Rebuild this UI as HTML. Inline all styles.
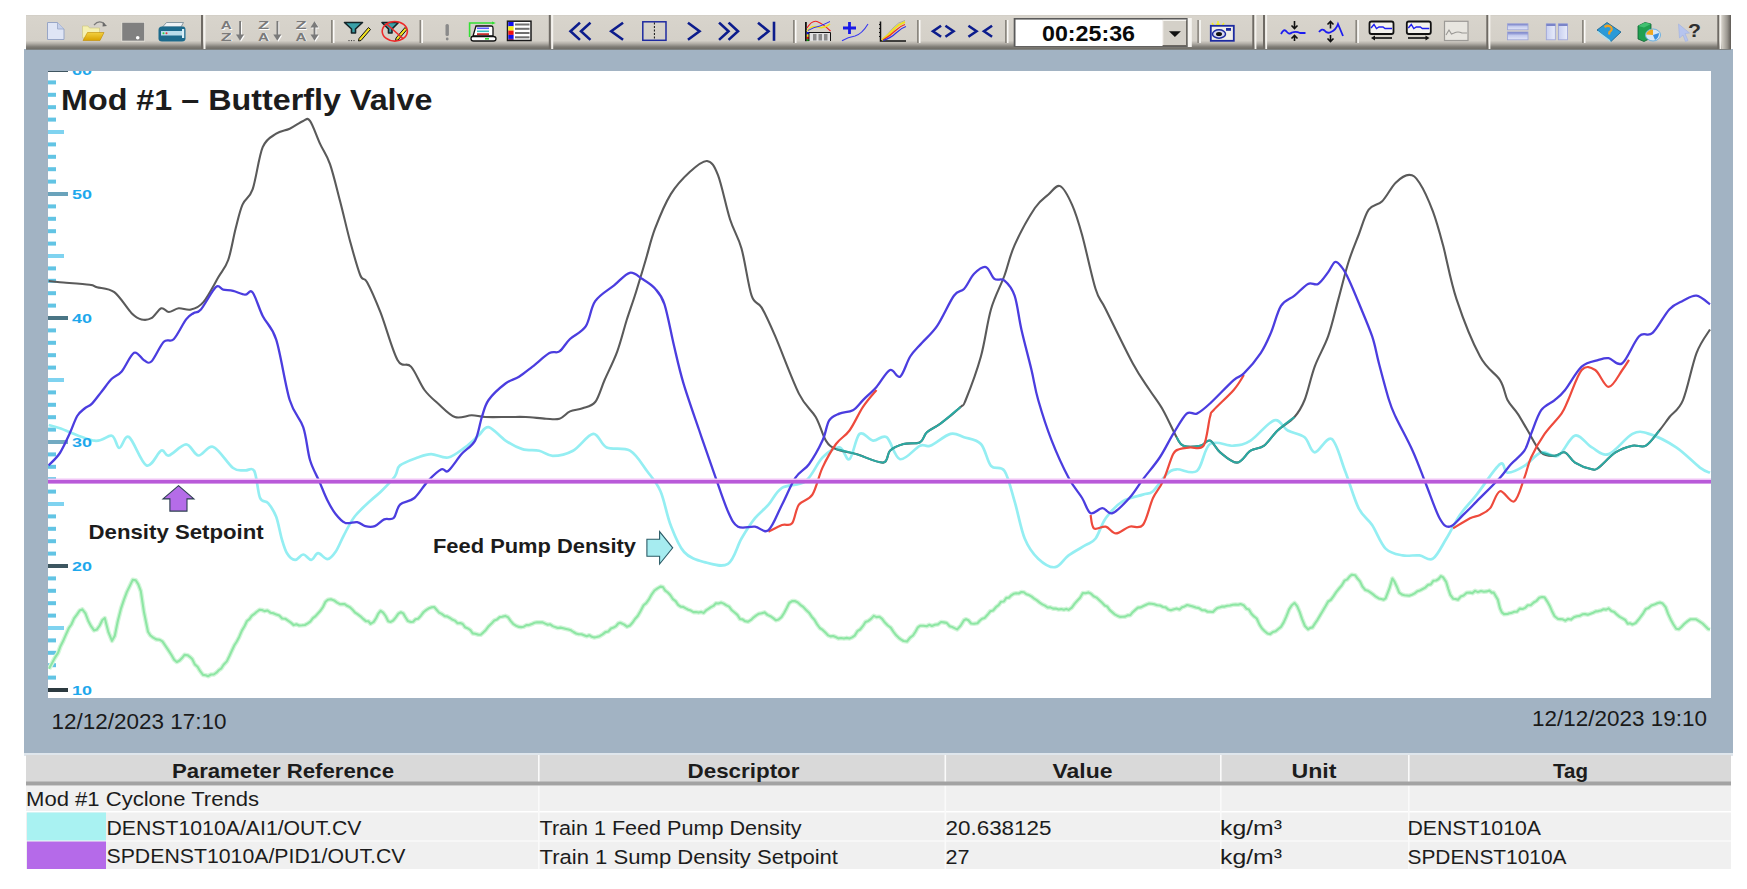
<!DOCTYPE html>
<html><head><meta charset="utf-8">
<style>
html,body{margin:0;padding:0;background:#fff;}
body{width:1747px;height:889px;position:relative;overflow:hidden;font-family:"Liberation Sans",sans-serif;}
svg text{font-family:"Liberation Sans",sans-serif;}
.yl{font-weight:bold;font-size:12px;fill:#1ea8ec;}
</style></head><body>
<svg style="position:absolute;left:0;top:0" width="1747" height="889" viewBox="0 0 1747 889">
<defs>
<clipPath id="pc"><rect x="48" y="71" width="1663" height="627"/></clipPath>
<linearGradient id="tbg" x1="0" y1="0" x2="0" y2="1">
<stop offset="0" stop-color="#cfcbc3"/><stop offset="0.03" stop-color="#d8d4cc"/><stop offset="0.74" stop-color="#d4d0c8"/><stop offset="0.82" stop-color="#b4b0a9"/><stop offset="0.92" stop-color="#7e7b75"/><stop offset="1" stop-color="#6c6a64"/>
</linearGradient>
</defs>
<rect x="24" y="49" width="1709" height="704" fill="#a2b3c3"/>
<rect x="26" y="15" width="1705" height="34.7" fill="url(#tbg)"/>
<rect x="48" y="71" width="1663" height="627" fill="#fff"/>
<g clip-path="url(#pc)">
<rect x="48" y="688.0" width="20" height="4" fill="#2c3a40"/>
<rect x="48" y="675.6" width="8" height="4" fill="#62c4e4"/>
<rect x="48" y="663.2" width="8" height="4" fill="#62c4e4"/>
<rect x="48" y="650.8" width="8" height="4" fill="#62c4e4"/>
<rect x="48" y="638.4" width="8" height="4" fill="#62c4e4"/>
<rect x="48" y="626.0" width="16" height="4" fill="#7fd3f0"/>
<rect x="48" y="613.6" width="8" height="4" fill="#62c4e4"/>
<rect x="48" y="601.2" width="8" height="4" fill="#62c4e4"/>
<rect x="48" y="588.8" width="8" height="4" fill="#62c4e4"/>
<rect x="48" y="576.4" width="8" height="4" fill="#62c4e4"/>
<rect x="48" y="564.0" width="20" height="4" fill="#3d5660"/>
<rect x="48" y="551.6" width="8" height="4" fill="#62c4e4"/>
<rect x="48" y="539.2" width="8" height="4" fill="#62c4e4"/>
<rect x="48" y="526.8" width="8" height="4" fill="#62c4e4"/>
<rect x="48" y="514.4" width="8" height="4" fill="#62c4e4"/>
<rect x="48" y="502.0" width="16" height="4" fill="#7fd3f0"/>
<rect x="48" y="489.6" width="8" height="4" fill="#62c4e4"/>
<rect x="48" y="477.2" width="8" height="4" fill="#62c4e4"/>
<rect x="48" y="464.8" width="8" height="4" fill="#62c4e4"/>
<rect x="48" y="452.4" width="8" height="4" fill="#62c4e4"/>
<rect x="48" y="440.0" width="20" height="4" fill="#72aac2"/>
<rect x="48" y="427.6" width="8" height="4" fill="#62c4e4"/>
<rect x="48" y="415.2" width="8" height="4" fill="#62c4e4"/>
<rect x="48" y="402.8" width="8" height="4" fill="#62c4e4"/>
<rect x="48" y="390.4" width="8" height="4" fill="#62c4e4"/>
<rect x="48" y="378.0" width="16" height="4" fill="#7fd3f0"/>
<rect x="48" y="365.6" width="8" height="4" fill="#62c4e4"/>
<rect x="48" y="353.2" width="8" height="4" fill="#62c4e4"/>
<rect x="48" y="340.8" width="8" height="4" fill="#62c4e4"/>
<rect x="48" y="328.4" width="8" height="4" fill="#62c4e4"/>
<rect x="48" y="316.0" width="20" height="4" fill="#4a7585"/>
<rect x="48" y="303.6" width="8" height="4" fill="#62c4e4"/>
<rect x="48" y="291.2" width="8" height="4" fill="#62c4e4"/>
<rect x="48" y="278.8" width="8" height="4" fill="#62c4e4"/>
<rect x="48" y="266.4" width="8" height="4" fill="#62c4e4"/>
<rect x="48" y="254.0" width="16" height="4" fill="#7fd3f0"/>
<rect x="48" y="241.6" width="8" height="4" fill="#62c4e4"/>
<rect x="48" y="229.2" width="8" height="4" fill="#62c4e4"/>
<rect x="48" y="216.8" width="8" height="4" fill="#62c4e4"/>
<rect x="48" y="204.4" width="8" height="4" fill="#62c4e4"/>
<rect x="48" y="192.0" width="20" height="4" fill="#6aa3bb"/>
<rect x="48" y="179.6" width="8" height="4" fill="#62c4e4"/>
<rect x="48" y="167.2" width="8" height="4" fill="#62c4e4"/>
<rect x="48" y="154.8" width="8" height="4" fill="#62c4e4"/>
<rect x="48" y="142.4" width="8" height="4" fill="#62c4e4"/>
<rect x="48" y="130.0" width="16" height="4" fill="#7fd3f0"/>
<rect x="48" y="117.6" width="8" height="4" fill="#62c4e4"/>
<rect x="48" y="105.2" width="8" height="4" fill="#62c4e4"/>
<rect x="48" y="92.8" width="8" height="4" fill="#62c4e4"/>
<rect x="48" y="80.4" width="8" height="4" fill="#62c4e4"/>
<rect x="48" y="68.0" width="20" height="4" fill="#3f5560"/>

<path d="M49.0,668.8 L51.3,664.5 L54.5,658.4 L58.0,652.9 L60.5,646.2 L63.1,641.1 L65.9,634.6 L68.8,628.2 L71.4,624.5 L74.1,618.4 L76.9,614.6 L79.7,610.5 L82.3,609.4 L85.4,613.3 L88.3,621.0 L91.2,626.4 L94.0,630.4 L96.8,629.6 L99.7,625.5 L102.4,620.0 L104.8,618.2 L108.5,632.4 L112.0,640.8 L114.8,635.8 L117.7,621.5 L121.0,608.6 L123.8,600.2 L126.9,591.9 L130.0,585.6 L132.7,579.9 L135.7,580.3 L138.3,584.4 L140.8,591.1 L144.0,612.3 L148.0,631.8 L150.4,635.5 L153.2,637.6 L156.3,639.4 L159.4,639.7 L162.4,641.4 L165.3,645.7 L168.3,650.1 L171.3,654.7 L174.2,659.8 L176.8,662.0 L179.6,660.5 L182.0,658.1 L184.5,654.9 L187.6,655.2 L189.8,656.8 L192.2,659.0 L194.8,664.4 L197.5,666.7 L200.2,671.2 L203.0,674.9 L205.6,675.2 L208.2,676.2 L211.0,674.5 L213.7,674.5 L216.4,672.7 L219.0,670.0 L221.4,668.3 L223.6,664.8 L226.8,661.4 L229.3,656.3 L231.7,651.0 L234.4,645.3 L236.8,641.5 L239.3,636.7 L241.9,630.6 L244.5,626.3 L247.0,621.0 L249.4,619.1 L251.7,615.9 L254.0,614.2 L256.5,612.0 L259.5,609.8 L261.9,610.0 L264.6,611.1 L267.5,610.5 L270.4,612.7 L273.4,613.3 L276.4,614.6 L279.3,615.6 L282.2,618.5 L285.1,618.7 L288.0,620.7 L290.9,622.6 L293.7,625.1 L296.5,624.3 L299.1,625.5 L302.1,625.3 L304.9,625.0 L307.7,623.4 L310.3,621.6 L312.9,618.2 L315.3,616.4 L318.1,613.2 L320.6,610.5 L323.1,606.8 L325.5,601.7 L327.9,599.7 L331.0,599.3 L334.1,600.4 L337.1,602.6 L340.0,604.2 L342.4,604.1 L344.6,604.0 L347.0,605.8 L350.2,607.4 L352.3,609.4 L354.8,612.3 L357.5,614.2 L360.4,616.3 L363.2,618.9 L365.9,621.1 L368.4,621.2 L370.5,623.8 L373.7,621.9 L376.2,618.0 L378.3,613.6 L380.6,610.8 L383.1,612.6 L385.6,616.0 L388.2,621.2 L390.7,621.9 L393.2,620.5 L395.8,617.3 L398.4,613.6 L400.9,612.3 L403.2,613.4 L405.3,617.0 L407.8,620.9 L411.0,622.0 L413.1,621.8 L415.5,619.3 L418.1,618.8 L420.9,615.7 L423.7,612.0 L426.4,609.9 L428.9,608.3 L431.2,607.4 L434.2,607.0 L436.8,610.0 L439.1,612.6 L441.7,613.9 L444.7,616.1 L447.0,616.4 L449.5,617.7 L452.1,619.5 L454.8,620.6 L457.6,623.2 L460.2,623.0 L462.7,624.0 L465.0,627.2 L468.0,628.5 L470.4,630.2 L472.7,633.4 L475.3,633.7 L478.5,634.8 L480.7,634.7 L483.2,632.6 L485.9,629.9 L488.7,626.2 L491.5,623.6 L494.4,620.4 L497.1,619.4 L499.7,617.1 L502.1,616.7 L505.2,615.9 L508.0,617.2 L510.6,620.9 L513.1,623.8 L515.9,625.7 L519.0,626.9 L521.3,627.1 L523.8,626.7 L526.4,625.1 L529.0,625.1 L531.7,624.1 L534.5,622.7 L537.2,622.2 L539.9,622.4 L542.6,622.4 L545.2,623.6 L547.7,624.7 L550.2,624.3 L552.7,626.1 L555.2,627.1 L557.8,628.0 L560.5,627.6 L563.3,628.2 L566.2,629.0 L568.5,629.6 L571.0,630.3 L573.5,632.0 L576.1,633.5 L578.7,634.2 L581.4,634.2 L584.1,635.3 L586.7,636.3 L589.3,635.2 L591.8,636.8 L594.3,637.4 L596.6,637.0 L599.6,636.2 L602.6,634.4 L605.5,632.1 L608.3,631.5 L611.0,628.5 L613.6,627.6 L616.0,626.2 L618.2,623.5 L620.2,622.7 L624.3,624.6 L627.0,626.7 L630.0,625.5 L632.4,622.8 L635.0,619.0 L637.7,616.0 L640.6,611.0 L643.6,605.2 L646.2,603.1 L648.9,599.4 L651.6,594.6 L654.5,590.5 L657.5,588.4 L660.5,586.6 L662.9,587.0 L665.3,590.7 L667.8,592.5 L670.4,595.2 L673.0,599.2 L675.6,601.2 L678.1,604.8 L680.7,606.7 L683.2,606.9 L685.8,608.4 L688.3,609.7 L690.9,610.6 L693.4,612.1 L695.9,612.0 L698.5,612.6 L701.0,611.9 L703.5,612.9 L706.0,610.4 L708.4,608.8 L710.9,607.1 L713.4,605.9 L715.9,603.3 L718.5,603.5 L721.2,602.6 L723.7,603.6 L726.4,605.4 L729.1,606.6 L731.9,610.3 L734.6,612.5 L737.4,614.9 L740.0,619.0 L742.6,619.4 L744.9,621.1 L748.1,621.7 L751.0,619.9 L753.7,617.3 L756.3,615.4 L759.0,613.7 L761.7,613.3 L764.6,612.4 L767.5,614.9 L770.4,616.2 L773.2,618.1 L776.0,620.3 L778.6,619.5 L781.5,617.1 L784.1,613.0 L786.6,608.3 L789.2,603.0 L792.1,601.1 L794.7,601.0 L797.5,602.3 L800.3,604.8 L803.2,606.9 L806.1,610.0 L809.0,612.7 L811.7,616.7 L814.4,619.8 L817.0,624.1 L819.8,628.0 L822.7,629.9 L825.9,633.1 L828.2,635.4 L830.6,636.4 L833.1,636.0 L835.7,637.0 L838.4,638.4 L841.1,638.0 L843.9,638.5 L846.7,637.9 L849.5,638.5 L852.1,637.4 L854.7,635.6 L857.4,631.2 L860.1,629.5 L862.8,626.2 L865.5,622.0 L868.3,620.9 L871.0,618.9 L873.8,615.9 L876.5,617.1 L879.2,616.7 L882.1,618.8 L884.9,622.6 L887.8,625.5 L890.7,627.6 L893.5,631.8 L896.2,635.3 L898.8,637.8 L901.2,639.6 L903.5,641.0 L907.0,641.5 L910.1,637.7 L913.0,635.5 L915.6,631.5 L917.9,627.3 L920.0,625.8 L923.4,625.7 L926.9,626.2 L929.2,624.8 L931.9,626.0 L934.9,624.8 L938.0,624.4 L941.0,622.0 L943.7,622.4 L946.7,622.9 L949.7,626.3 L952.4,627.1 L955.0,628.4 L957.2,629.4 L960.6,625.7 L964.0,620.2 L966.1,619.2 L968.4,620.3 L971.1,623.5 L974.0,623.7 L977.5,623.3 L979.7,620.7 L982.1,618.8 L984.7,617.9 L987.5,614.8 L990.3,611.3 L993.1,610.5 L995.9,607.2 L998.6,605.2 L1001.1,601.7 L1003.8,601.5 L1006.3,597.9 L1008.8,597.8 L1011.3,595.3 L1013.7,593.8 L1016.2,593.2 L1018.7,593.5 L1021.4,592.0 L1023.9,592.2 L1026.4,594.2 L1029.0,595.1 L1031.7,596.6 L1034.3,598.7 L1037.0,600.4 L1039.7,602.6 L1042.4,604.4 L1045.0,605.6 L1047.7,607.5 L1050.4,607.4 L1053.1,608.6 L1055.9,608.6 L1058.6,609.5 L1061.2,609.1 L1063.8,609.7 L1066.3,608.9 L1068.6,609.9 L1071.8,607.6 L1074.7,603.6 L1077.5,600.5 L1080.1,597.8 L1082.8,593.1 L1085.5,593.2 L1088.3,592.4 L1091.0,593.7 L1093.7,596.3 L1096.5,597.6 L1099.4,600.3 L1102.4,603.0 L1104.7,605.5 L1107.1,606.4 L1109.6,609.9 L1112.1,612.1 L1114.6,614.3 L1117.2,615.7 L1119.9,616.9 L1122.6,616.8 L1125.1,616.6 L1127.6,615.4 L1130.1,615.3 L1132.7,612.2 L1135.3,609.9 L1138.0,607.6 L1140.7,607.4 L1143.4,606.0 L1146.2,604.7 L1148.8,603.6 L1151.5,603.7 L1154.4,604.3 L1157.2,605.3 L1160.1,605.5 L1163.0,607.0 L1165.7,607.4 L1168.4,609.6 L1170.9,610.2 L1173.2,609.5 L1176.6,608.6 L1179.5,609.5 L1182.1,607.2 L1184.6,606.4 L1187.2,605.0 L1190.1,605.7 L1192.9,606.5 L1195.8,607.5 L1198.9,608.1 L1202.0,610.1 L1204.9,610.3 L1207.6,611.7 L1210.0,611.8 L1213.0,612.0 L1215.1,609.8 L1217.2,608.1 L1220.2,607.3 L1222.3,606.5 L1224.7,606.6 L1227.4,605.7 L1230.1,605.5 L1232.9,604.7 L1235.7,604.5 L1238.2,604.8 L1240.5,604.1 L1243.6,605.2 L1246.4,608.7 L1248.9,609.5 L1251.4,613.7 L1254.0,616.4 L1256.7,618.5 L1259.4,624.4 L1262.1,628.6 L1264.8,631.3 L1267.5,633.5 L1270.2,634.1 L1272.9,632.0 L1275.6,631.3 L1278.3,629.0 L1281.0,626.9 L1283.7,622.4 L1286.4,616.3 L1289.1,609.4 L1291.8,605.2 L1294.5,603.0 L1297.1,606.1 L1299.6,611.8 L1302.1,619.2 L1304.9,626.0 L1308.0,629.3 L1310.2,627.9 L1312.5,627.4 L1314.9,623.6 L1317.5,619.8 L1320.1,615.4 L1322.7,611.0 L1325.5,606.3 L1328.2,601.5 L1330.7,600.0 L1333.4,596.4 L1336.2,592.1 L1339.1,588.5 L1341.9,585.2 L1344.6,580.6 L1347.3,579.4 L1349.7,576.3 L1351.9,574.7 L1355.1,575.2 L1357.7,578.8 L1360.0,581.4 L1362.4,586.5 L1365.4,590.1 L1367.7,590.7 L1370.3,592.3 L1373.1,594.4 L1375.9,596.7 L1378.7,598.4 L1381.3,599.1 L1383.7,599.7 L1385.6,598.3 L1389.6,587.9 L1392.4,578.5 L1394.5,581.7 L1396.6,586.2 L1399.2,592.6 L1402.5,594.8 L1404.5,595.3 L1406.8,595.5 L1409.3,595.7 L1412.0,594.7 L1414.7,593.4 L1417.4,591.2 L1420.1,590.4 L1422.7,589.0 L1425.3,587.6 L1428.0,584.9 L1430.8,584.4 L1433.5,580.7 L1436.1,580.5 L1438.6,579.0 L1440.9,576.1 L1443.0,577.2 L1446.1,581.8 L1448.3,589.0 L1450.3,594.8 L1453.1,598.7 L1455.4,599.0 L1458.0,599.8 L1460.7,596.6 L1463.6,595.5 L1466.7,592.8 L1470.0,592.6 L1472.4,593.1 L1475.1,590.9 L1478.0,592.1 L1481.0,591.1 L1483.9,591.8 L1486.8,591.4 L1489.4,590.6 L1491.7,592.6 L1493.6,592.5 L1497.8,599.6 L1500.0,608.3 L1501.9,612.4 L1504.0,614.1 L1507.5,614.0 L1509.4,613.2 L1511.7,612.9 L1514.3,611.8 L1517.0,611.8 L1519.8,608.6 L1522.6,609.0 L1525.2,607.9 L1527.7,605.2 L1530.7,605.2 L1533.7,602.5 L1536.6,600.8 L1539.3,597.7 L1542.0,597.0 L1544.6,597.4 L1547.3,601.6 L1549.6,605.7 L1551.9,610.9 L1554.6,616.2 L1558.1,619.0 L1560.3,619.1 L1562.7,619.3 L1565.3,620.7 L1568.1,618.9 L1571.0,619.6 L1573.9,617.2 L1576.8,616.3 L1579.7,615.9 L1582.5,614.3 L1585.1,614.1 L1587.9,614.7 L1590.6,613.7 L1593.2,612.7 L1595.8,611.4 L1598.4,611.1 L1601.0,610.5 L1603.5,609.3 L1606.1,609.6 L1608.7,608.4 L1611.4,610.9 L1614.2,611.9 L1617.0,614.7 L1619.8,616.8 L1622.6,618.4 L1625.3,620.0 L1627.8,623.8 L1630.2,623.3 L1632.4,624.5 L1635.7,623.0 L1638.4,619.8 L1640.8,616.7 L1643.2,613.3 L1645.9,608.9 L1648.5,608.0 L1651.4,605.5 L1654.3,604.6 L1657.2,603.3 L1660.1,602.6 L1662.7,603.6 L1665.6,607.1 L1668.2,614.1 L1670.7,619.4 L1673.3,624.2 L1676.2,628.8 L1678.8,629.2 L1681.6,626.7 L1684.4,623.8 L1687.3,621.4 L1690.2,619.3 L1693.1,619.2 L1696.1,619.3 L1699.4,621.3 L1702.6,623.5 L1705.6,626.4 L1708.2,629.1 L1710.0,629.6" stroke="#d4f6db" stroke-width="4.6" fill="none" stroke-linejoin="round"/>
<path d="M49.0,668.8 L51.3,664.5 L54.5,658.4 L58.0,652.9 L60.5,646.2 L63.1,641.1 L65.9,634.6 L68.8,628.2 L71.4,624.5 L74.1,618.4 L76.9,614.6 L79.7,610.5 L82.3,609.4 L85.4,613.3 L88.3,621.0 L91.2,626.4 L94.0,630.4 L96.8,629.6 L99.7,625.5 L102.4,620.0 L104.8,618.2 L108.5,632.4 L112.0,640.8 L114.8,635.8 L117.7,621.5 L121.0,608.6 L123.8,600.2 L126.9,591.9 L130.0,585.6 L132.7,579.9 L135.7,580.3 L138.3,584.4 L140.8,591.1 L144.0,612.3 L148.0,631.8 L150.4,635.5 L153.2,637.6 L156.3,639.4 L159.4,639.7 L162.4,641.4 L165.3,645.7 L168.3,650.1 L171.3,654.7 L174.2,659.8 L176.8,662.0 L179.6,660.5 L182.0,658.1 L184.5,654.9 L187.6,655.2 L189.8,656.8 L192.2,659.0 L194.8,664.4 L197.5,666.7 L200.2,671.2 L203.0,674.9 L205.6,675.2 L208.2,676.2 L211.0,674.5 L213.7,674.5 L216.4,672.7 L219.0,670.0 L221.4,668.3 L223.6,664.8 L226.8,661.4 L229.3,656.3 L231.7,651.0 L234.4,645.3 L236.8,641.5 L239.3,636.7 L241.9,630.6 L244.5,626.3 L247.0,621.0 L249.4,619.1 L251.7,615.9 L254.0,614.2 L256.5,612.0 L259.5,609.8 L261.9,610.0 L264.6,611.1 L267.5,610.5 L270.4,612.7 L273.4,613.3 L276.4,614.6 L279.3,615.6 L282.2,618.5 L285.1,618.7 L288.0,620.7 L290.9,622.6 L293.7,625.1 L296.5,624.3 L299.1,625.5 L302.1,625.3 L304.9,625.0 L307.7,623.4 L310.3,621.6 L312.9,618.2 L315.3,616.4 L318.1,613.2 L320.6,610.5 L323.1,606.8 L325.5,601.7 L327.9,599.7 L331.0,599.3 L334.1,600.4 L337.1,602.6 L340.0,604.2 L342.4,604.1 L344.6,604.0 L347.0,605.8 L350.2,607.4 L352.3,609.4 L354.8,612.3 L357.5,614.2 L360.4,616.3 L363.2,618.9 L365.9,621.1 L368.4,621.2 L370.5,623.8 L373.7,621.9 L376.2,618.0 L378.3,613.6 L380.6,610.8 L383.1,612.6 L385.6,616.0 L388.2,621.2 L390.7,621.9 L393.2,620.5 L395.8,617.3 L398.4,613.6 L400.9,612.3 L403.2,613.4 L405.3,617.0 L407.8,620.9 L411.0,622.0 L413.1,621.8 L415.5,619.3 L418.1,618.8 L420.9,615.7 L423.7,612.0 L426.4,609.9 L428.9,608.3 L431.2,607.4 L434.2,607.0 L436.8,610.0 L439.1,612.6 L441.7,613.9 L444.7,616.1 L447.0,616.4 L449.5,617.7 L452.1,619.5 L454.8,620.6 L457.6,623.2 L460.2,623.0 L462.7,624.0 L465.0,627.2 L468.0,628.5 L470.4,630.2 L472.7,633.4 L475.3,633.7 L478.5,634.8 L480.7,634.7 L483.2,632.6 L485.9,629.9 L488.7,626.2 L491.5,623.6 L494.4,620.4 L497.1,619.4 L499.7,617.1 L502.1,616.7 L505.2,615.9 L508.0,617.2 L510.6,620.9 L513.1,623.8 L515.9,625.7 L519.0,626.9 L521.3,627.1 L523.8,626.7 L526.4,625.1 L529.0,625.1 L531.7,624.1 L534.5,622.7 L537.2,622.2 L539.9,622.4 L542.6,622.4 L545.2,623.6 L547.7,624.7 L550.2,624.3 L552.7,626.1 L555.2,627.1 L557.8,628.0 L560.5,627.6 L563.3,628.2 L566.2,629.0 L568.5,629.6 L571.0,630.3 L573.5,632.0 L576.1,633.5 L578.7,634.2 L581.4,634.2 L584.1,635.3 L586.7,636.3 L589.3,635.2 L591.8,636.8 L594.3,637.4 L596.6,637.0 L599.6,636.2 L602.6,634.4 L605.5,632.1 L608.3,631.5 L611.0,628.5 L613.6,627.6 L616.0,626.2 L618.2,623.5 L620.2,622.7 L624.3,624.6 L627.0,626.7 L630.0,625.5 L632.4,622.8 L635.0,619.0 L637.7,616.0 L640.6,611.0 L643.6,605.2 L646.2,603.1 L648.9,599.4 L651.6,594.6 L654.5,590.5 L657.5,588.4 L660.5,586.6 L662.9,587.0 L665.3,590.7 L667.8,592.5 L670.4,595.2 L673.0,599.2 L675.6,601.2 L678.1,604.8 L680.7,606.7 L683.2,606.9 L685.8,608.4 L688.3,609.7 L690.9,610.6 L693.4,612.1 L695.9,612.0 L698.5,612.6 L701.0,611.9 L703.5,612.9 L706.0,610.4 L708.4,608.8 L710.9,607.1 L713.4,605.9 L715.9,603.3 L718.5,603.5 L721.2,602.6 L723.7,603.6 L726.4,605.4 L729.1,606.6 L731.9,610.3 L734.6,612.5 L737.4,614.9 L740.0,619.0 L742.6,619.4 L744.9,621.1 L748.1,621.7 L751.0,619.9 L753.7,617.3 L756.3,615.4 L759.0,613.7 L761.7,613.3 L764.6,612.4 L767.5,614.9 L770.4,616.2 L773.2,618.1 L776.0,620.3 L778.6,619.5 L781.5,617.1 L784.1,613.0 L786.6,608.3 L789.2,603.0 L792.1,601.1 L794.7,601.0 L797.5,602.3 L800.3,604.8 L803.2,606.9 L806.1,610.0 L809.0,612.7 L811.7,616.7 L814.4,619.8 L817.0,624.1 L819.8,628.0 L822.7,629.9 L825.9,633.1 L828.2,635.4 L830.6,636.4 L833.1,636.0 L835.7,637.0 L838.4,638.4 L841.1,638.0 L843.9,638.5 L846.7,637.9 L849.5,638.5 L852.1,637.4 L854.7,635.6 L857.4,631.2 L860.1,629.5 L862.8,626.2 L865.5,622.0 L868.3,620.9 L871.0,618.9 L873.8,615.9 L876.5,617.1 L879.2,616.7 L882.1,618.8 L884.9,622.6 L887.8,625.5 L890.7,627.6 L893.5,631.8 L896.2,635.3 L898.8,637.8 L901.2,639.6 L903.5,641.0 L907.0,641.5 L910.1,637.7 L913.0,635.5 L915.6,631.5 L917.9,627.3 L920.0,625.8 L923.4,625.7 L926.9,626.2 L929.2,624.8 L931.9,626.0 L934.9,624.8 L938.0,624.4 L941.0,622.0 L943.7,622.4 L946.7,622.9 L949.7,626.3 L952.4,627.1 L955.0,628.4 L957.2,629.4 L960.6,625.7 L964.0,620.2 L966.1,619.2 L968.4,620.3 L971.1,623.5 L974.0,623.7 L977.5,623.3 L979.7,620.7 L982.1,618.8 L984.7,617.9 L987.5,614.8 L990.3,611.3 L993.1,610.5 L995.9,607.2 L998.6,605.2 L1001.1,601.7 L1003.8,601.5 L1006.3,597.9 L1008.8,597.8 L1011.3,595.3 L1013.7,593.8 L1016.2,593.2 L1018.7,593.5 L1021.4,592.0 L1023.9,592.2 L1026.4,594.2 L1029.0,595.1 L1031.7,596.6 L1034.3,598.7 L1037.0,600.4 L1039.7,602.6 L1042.4,604.4 L1045.0,605.6 L1047.7,607.5 L1050.4,607.4 L1053.1,608.6 L1055.9,608.6 L1058.6,609.5 L1061.2,609.1 L1063.8,609.7 L1066.3,608.9 L1068.6,609.9 L1071.8,607.6 L1074.7,603.6 L1077.5,600.5 L1080.1,597.8 L1082.8,593.1 L1085.5,593.2 L1088.3,592.4 L1091.0,593.7 L1093.7,596.3 L1096.5,597.6 L1099.4,600.3 L1102.4,603.0 L1104.7,605.5 L1107.1,606.4 L1109.6,609.9 L1112.1,612.1 L1114.6,614.3 L1117.2,615.7 L1119.9,616.9 L1122.6,616.8 L1125.1,616.6 L1127.6,615.4 L1130.1,615.3 L1132.7,612.2 L1135.3,609.9 L1138.0,607.6 L1140.7,607.4 L1143.4,606.0 L1146.2,604.7 L1148.8,603.6 L1151.5,603.7 L1154.4,604.3 L1157.2,605.3 L1160.1,605.5 L1163.0,607.0 L1165.7,607.4 L1168.4,609.6 L1170.9,610.2 L1173.2,609.5 L1176.6,608.6 L1179.5,609.5 L1182.1,607.2 L1184.6,606.4 L1187.2,605.0 L1190.1,605.7 L1192.9,606.5 L1195.8,607.5 L1198.9,608.1 L1202.0,610.1 L1204.9,610.3 L1207.6,611.7 L1210.0,611.8 L1213.0,612.0 L1215.1,609.8 L1217.2,608.1 L1220.2,607.3 L1222.3,606.5 L1224.7,606.6 L1227.4,605.7 L1230.1,605.5 L1232.9,604.7 L1235.7,604.5 L1238.2,604.8 L1240.5,604.1 L1243.6,605.2 L1246.4,608.7 L1248.9,609.5 L1251.4,613.7 L1254.0,616.4 L1256.7,618.5 L1259.4,624.4 L1262.1,628.6 L1264.8,631.3 L1267.5,633.5 L1270.2,634.1 L1272.9,632.0 L1275.6,631.3 L1278.3,629.0 L1281.0,626.9 L1283.7,622.4 L1286.4,616.3 L1289.1,609.4 L1291.8,605.2 L1294.5,603.0 L1297.1,606.1 L1299.6,611.8 L1302.1,619.2 L1304.9,626.0 L1308.0,629.3 L1310.2,627.9 L1312.5,627.4 L1314.9,623.6 L1317.5,619.8 L1320.1,615.4 L1322.7,611.0 L1325.5,606.3 L1328.2,601.5 L1330.7,600.0 L1333.4,596.4 L1336.2,592.1 L1339.1,588.5 L1341.9,585.2 L1344.6,580.6 L1347.3,579.4 L1349.7,576.3 L1351.9,574.7 L1355.1,575.2 L1357.7,578.8 L1360.0,581.4 L1362.4,586.5 L1365.4,590.1 L1367.7,590.7 L1370.3,592.3 L1373.1,594.4 L1375.9,596.7 L1378.7,598.4 L1381.3,599.1 L1383.7,599.7 L1385.6,598.3 L1389.6,587.9 L1392.4,578.5 L1394.5,581.7 L1396.6,586.2 L1399.2,592.6 L1402.5,594.8 L1404.5,595.3 L1406.8,595.5 L1409.3,595.7 L1412.0,594.7 L1414.7,593.4 L1417.4,591.2 L1420.1,590.4 L1422.7,589.0 L1425.3,587.6 L1428.0,584.9 L1430.8,584.4 L1433.5,580.7 L1436.1,580.5 L1438.6,579.0 L1440.9,576.1 L1443.0,577.2 L1446.1,581.8 L1448.3,589.0 L1450.3,594.8 L1453.1,598.7 L1455.4,599.0 L1458.0,599.8 L1460.7,596.6 L1463.6,595.5 L1466.7,592.8 L1470.0,592.6 L1472.4,593.1 L1475.1,590.9 L1478.0,592.1 L1481.0,591.1 L1483.9,591.8 L1486.8,591.4 L1489.4,590.6 L1491.7,592.6 L1493.6,592.5 L1497.8,599.6 L1500.0,608.3 L1501.9,612.4 L1504.0,614.1 L1507.5,614.0 L1509.4,613.2 L1511.7,612.9 L1514.3,611.8 L1517.0,611.8 L1519.8,608.6 L1522.6,609.0 L1525.2,607.9 L1527.7,605.2 L1530.7,605.2 L1533.7,602.5 L1536.6,600.8 L1539.3,597.7 L1542.0,597.0 L1544.6,597.4 L1547.3,601.6 L1549.6,605.7 L1551.9,610.9 L1554.6,616.2 L1558.1,619.0 L1560.3,619.1 L1562.7,619.3 L1565.3,620.7 L1568.1,618.9 L1571.0,619.6 L1573.9,617.2 L1576.8,616.3 L1579.7,615.9 L1582.5,614.3 L1585.1,614.1 L1587.9,614.7 L1590.6,613.7 L1593.2,612.7 L1595.8,611.4 L1598.4,611.1 L1601.0,610.5 L1603.5,609.3 L1606.1,609.6 L1608.7,608.4 L1611.4,610.9 L1614.2,611.9 L1617.0,614.7 L1619.8,616.8 L1622.6,618.4 L1625.3,620.0 L1627.8,623.8 L1630.2,623.3 L1632.4,624.5 L1635.7,623.0 L1638.4,619.8 L1640.8,616.7 L1643.2,613.3 L1645.9,608.9 L1648.5,608.0 L1651.4,605.5 L1654.3,604.6 L1657.2,603.3 L1660.1,602.6 L1662.7,603.6 L1665.6,607.1 L1668.2,614.1 L1670.7,619.4 L1673.3,624.2 L1676.2,628.8 L1678.8,629.2 L1681.6,626.7 L1684.4,623.8 L1687.3,621.4 L1690.2,619.3 L1693.1,619.2 L1696.1,619.3 L1699.4,621.3 L1702.6,623.5 L1705.6,626.4 L1708.2,629.1 L1710.0,629.6" stroke="#8ee6a4" stroke-width="2.1" fill="none" stroke-linejoin="round"/>
<path d="M48.7,425.0 C50.6,425.6 52.3,425.7 59.9,428.3 C67.5,430.9 85.8,439.5 94.5,440.7 C103.2,441.9 107.7,434.5 111.8,435.7 C115.9,436.9 116.4,447.8 119.3,448.0 C122.2,448.2 124.5,434.1 129.0,437.0 C133.5,439.9 141.1,463.1 146.5,465.4 C151.9,467.7 157.6,452.2 161.3,450.6 C165.0,449.0 164.7,456.5 168.8,455.5 C172.9,454.5 181.2,444.4 186.1,444.4 C191.0,444.4 194.0,455.1 198.5,455.5 C203.0,455.9 207.5,444.8 213.3,446.9 C219.1,449.0 227.8,464.1 233.1,468.0 C238.4,471.9 241.5,469.9 245.0,470.4 C248.5,470.9 251.8,466.4 254.3,471.0 C256.8,475.6 257.7,492.4 260.0,497.8 C262.3,503.2 265.4,500.0 268.1,503.2 C270.8,506.4 273.9,510.9 276.2,516.7 C278.4,522.6 279.8,532.2 281.6,538.3 C283.4,544.4 284.8,549.6 287.0,553.2 C289.2,556.8 292.4,559.7 295.1,559.9 C297.8,560.1 300.5,554.5 303.2,554.5 C305.9,554.5 308.8,560.1 311.3,559.9 C313.8,559.7 315.4,553.3 318.1,553.2 C320.8,553.1 324.6,559.4 327.5,559.2 C330.4,559.0 332.9,555.7 335.6,551.8 C338.3,547.9 340.6,541.5 343.7,535.6 C346.8,529.8 350.0,522.6 354.5,516.7 C359.0,510.9 366.2,504.8 370.7,500.5 C375.2,496.2 377.4,495.1 381.5,491.0 C385.6,486.9 391.9,480.5 395.0,476.2 C398.1,471.9 396.2,468.5 400.0,465.4 C403.8,462.3 412.5,459.4 417.7,457.5 C422.9,455.6 426.1,454.1 431.2,454.1 C436.3,454.1 442.5,458.6 448.1,457.5 C453.7,456.4 459.9,451.0 465.0,447.4 C470.1,443.8 474.6,439.0 478.5,435.6 C482.4,432.2 484.1,426.3 488.6,427.1 C493.1,427.9 499.9,436.9 505.5,440.6 C511.1,444.3 516.8,447.4 522.4,449.1 C528.0,450.8 534.2,449.6 539.2,450.7 C544.2,451.8 547.1,455.8 552.7,455.8 C558.3,455.8 566.2,454.4 573.0,450.7 C579.8,447.0 587.6,434.4 593.2,433.9 C598.8,433.3 600.6,444.6 606.7,447.4 C612.8,450.2 623.3,446.8 630.0,450.7 C636.7,454.6 641.9,464.2 647.0,471.0 C652.1,477.8 656.6,482.2 660.5,491.2 C664.4,500.2 666.7,514.9 670.6,525.0 C674.5,535.1 678.5,545.8 684.1,552.0 C689.7,558.2 697.1,560.1 704.4,562.1 C711.7,564.1 721.8,567.7 728.0,563.8 C734.2,559.9 737.0,546.1 741.5,538.5 C746.0,530.9 750.5,523.8 755.0,518.2 C759.5,512.6 764.0,509.8 768.5,504.7 C773.0,499.6 775.8,491.8 782.0,487.9 C788.2,484.0 798.9,486.2 805.6,481.1 C812.4,476.0 816.9,463.1 822.5,457.5 C828.1,451.9 834.9,447.1 839.4,447.4 C843.9,447.7 846.1,461.4 849.5,459.2 C852.9,456.9 855.7,437.0 859.6,433.9 C863.5,430.8 868.6,440.1 873.1,440.6 C877.6,441.2 882.1,434.1 886.6,437.2 C891.1,440.3 894.5,457.8 900.1,459.2 C905.7,460.6 915.0,447.9 920.0,445.7 C925.0,443.4 925.1,447.7 930.2,445.7 C935.3,443.7 944.9,435.3 950.5,433.9 C956.1,432.5 958.9,435.5 964.0,437.2 C969.1,438.9 976.4,439.2 980.9,444.0 C985.4,448.8 987.1,461.4 991.0,465.9 C994.9,470.4 1000.6,465.1 1004.5,471.0 C1008.4,476.9 1011.2,490.1 1014.6,501.4 C1018.0,512.6 1020.8,529.0 1024.7,538.5 C1028.6,548.0 1033.1,553.9 1038.2,558.7 C1043.3,563.5 1050.0,567.8 1055.1,567.2 C1060.2,566.7 1063.5,559.1 1068.6,555.4 C1073.7,551.7 1081.0,548.0 1085.5,545.2 C1090.0,542.4 1092.2,543.0 1095.6,538.5 C1099.0,534.0 1101.2,524.4 1105.7,518.2 C1110.2,512.0 1116.4,505.3 1122.6,501.4 C1128.8,497.5 1137.8,496.3 1142.9,494.6 C1148.0,492.9 1149.1,494.6 1153.0,491.2 C1156.9,487.8 1162.6,478.0 1166.5,474.4 C1170.4,470.8 1171.5,469.9 1176.6,469.3 C1181.7,468.7 1191.3,475.2 1196.9,471.0 C1202.5,466.8 1203.9,448.2 1210.0,444.0 C1216.1,439.8 1226.9,446.3 1233.7,445.7 C1240.5,445.1 1243.8,444.8 1250.6,440.6 C1257.3,436.4 1268.0,422.1 1274.2,420.4 C1280.4,418.7 1282.7,427.7 1287.8,430.5 C1292.9,433.3 1300.1,433.6 1304.6,437.2 C1309.1,440.8 1310.2,452.1 1314.7,452.4 C1319.2,452.7 1326.5,435.8 1331.6,438.9 C1336.7,442.0 1340.6,459.5 1345.1,471.0 C1349.6,482.5 1354.1,499.1 1358.6,508.1 C1363.1,517.1 1367.6,518.2 1372.1,525.0 C1376.6,531.8 1380.5,543.5 1385.6,548.6 C1390.7,553.7 1396.9,554.3 1402.5,555.4 C1408.1,556.5 1414.3,554.8 1419.4,555.4 C1424.5,556.0 1428.4,561.5 1432.9,558.7 C1437.4,555.9 1441.9,545.8 1446.4,538.5 C1450.9,531.2 1454.9,522.2 1459.9,514.9 C1465.0,507.6 1470.0,503.1 1476.7,494.6 C1483.4,486.2 1494.9,467.9 1500.0,464.2 C1505.1,460.5 1503.4,472.4 1507.5,472.7 C1511.6,473.0 1518.8,469.3 1524.4,465.9 C1530.0,462.5 1535.6,454.1 1541.2,452.4 C1546.8,450.7 1552.5,458.6 1558.1,455.8 C1563.7,453.0 1569.4,437.0 1575.0,435.6 C1580.6,434.2 1586.3,444.3 1591.9,447.4 C1597.5,450.5 1602.0,456.4 1608.7,454.1 C1615.5,451.9 1625.7,437.3 1632.4,433.9 C1639.2,430.5 1641.9,431.6 1649.2,433.9 C1656.5,436.1 1667.8,441.8 1676.2,447.4 C1684.7,453.0 1694.3,463.4 1699.9,467.6 C1705.5,471.8 1708.3,471.9 1710.0,472.7" stroke="#94eef2" stroke-width="2.7" fill="none" stroke-linejoin="round"/>
<path d="M48.7,281.0 C50.6,281.2 53.1,281.7 59.9,282.3 C66.7,282.9 83.4,284.0 89.6,284.8 C95.8,285.6 92.9,286.0 97.0,287.2 C101.1,288.4 108.5,287.9 114.3,292.2 C120.1,296.5 127.1,308.7 131.6,313.2 C136.1,317.7 138.2,318.6 141.5,319.4 C144.8,320.2 148.1,320.0 151.4,318.2 C154.7,316.4 158.4,309.3 161.3,308.3 C164.2,307.3 165.9,312.0 168.8,312.0 C171.7,312.0 175.0,308.7 178.7,308.3 C182.4,307.9 186.9,310.5 191.0,309.5 C195.1,308.5 198.8,307.5 203.4,302.1 C208.0,296.7 214.2,284.3 218.3,277.3 C222.4,270.3 225.3,268.2 228.2,260.0 C231.1,251.8 233.3,237.4 235.7,228.2 C238.1,219.0 239.7,211.1 242.5,204.6 C245.3,198.1 249.2,199.0 252.6,189.4 C256.0,179.8 258.8,156.5 262.7,147.2 C266.6,137.9 271.7,136.8 276.2,133.7 C280.7,130.6 285.2,130.8 289.7,128.7 C294.2,126.6 299.8,122.2 303.2,120.9 C306.6,119.6 307.2,117.1 310.0,120.9 C312.8,124.7 316.8,136.7 320.1,143.9 C323.4,151.1 326.7,154.6 330.0,164.1 C333.3,173.6 336.7,188.3 340.1,201.2 C343.5,214.1 346.8,229.3 350.2,241.7 C353.6,254.1 357.6,268.8 360.4,275.5 C363.2,282.2 363.7,276.0 367.1,282.2 C370.5,288.4 375.5,299.7 380.6,312.6 C385.7,325.6 392.4,350.9 397.5,359.9 C402.6,368.9 406.5,361.6 411.0,366.6 C415.5,371.6 420.0,383.9 424.5,390.0 C429.0,396.1 432.9,399.0 438.0,403.5 C443.1,408.0 449.3,415.0 454.9,417.0 C460.5,419.0 466.6,415.3 471.7,415.3 C476.8,415.3 479.0,416.7 485.2,417.0 C491.4,417.3 502.1,417.0 508.9,417.0 C515.6,417.0 519.5,416.7 525.7,417.0 C531.9,417.3 540.4,418.4 546.0,418.7 C551.6,419.0 555.5,419.9 559.5,418.7 C563.5,417.5 566.1,413.1 570.0,411.4 C573.9,409.7 578.4,409.9 582.6,408.3 C586.8,406.7 591.5,406.7 595.2,402.0 C598.9,397.3 600.9,388.4 604.6,380.0 C608.3,371.6 613.5,361.6 617.2,351.6 C620.9,341.6 623.6,330.0 626.7,320.0 C629.9,310.0 633.0,301.7 636.1,291.7 C639.2,281.7 642.5,270.7 645.6,260.2 C648.8,249.7 650.8,239.7 655.0,228.7 C659.2,217.7 665.0,203.5 670.8,194.1 C676.6,184.7 683.7,177.5 689.7,172.0 C695.7,166.5 702.3,160.5 707.0,161.0 C711.7,161.5 714.2,165.5 718.0,175.2 C721.8,184.9 726.1,207.1 730.0,219.3 C733.9,231.5 737.9,235.8 741.5,248.5 C745.1,261.2 748.2,285.8 751.6,295.7 C755.0,305.6 757.8,300.9 761.7,307.6 C765.6,314.4 769.0,321.9 775.2,336.2 C781.4,350.5 792.1,380.1 798.9,393.6 C805.6,407.1 811.2,409.2 815.7,417.0 C820.2,424.8 822.5,435.2 825.9,440.6 C829.3,446.0 831.0,446.9 836.0,449.1 C841.0,451.4 848.3,451.9 856.2,454.1 C864.1,456.4 877.6,463.2 883.2,462.6 C888.8,462.0 886.6,453.8 890.0,450.7 C893.4,447.6 898.5,445.4 903.5,444.0 C908.5,442.6 916.1,444.3 920.0,442.3 C923.9,440.3 923.5,435.3 926.9,432.2 C930.3,429.1 934.8,427.9 940.4,423.7 C946.0,419.5 956.4,410.8 960.6,406.9 C964.8,402.9 962.3,408.4 965.7,400.0 C969.1,391.6 976.7,371.6 980.9,356.5 C985.1,341.4 987.1,322.7 991.0,309.2 C994.9,295.7 1000.6,286.2 1004.5,275.5 C1008.4,264.8 1009.5,256.4 1014.6,245.1 C1019.7,233.8 1029.3,216.4 1034.9,208.0 C1040.5,199.6 1044.2,198.2 1048.4,194.5 C1052.6,190.8 1056.3,184.4 1060.2,186.1 C1064.1,187.8 1068.3,196.4 1072.0,204.6 C1075.7,212.8 1078.2,220.9 1082.1,235.0 C1086.0,249.1 1091.7,276.6 1095.6,289.0 C1099.5,301.4 1099.5,296.8 1105.7,309.2 C1111.9,321.6 1125.4,349.7 1132.7,363.2 C1140.0,376.7 1144.5,382.2 1149.6,390.0 C1154.7,397.8 1158.6,402.3 1163.1,410.2 C1167.6,418.1 1173.2,431.3 1176.6,437.2 C1180.0,443.1 1179.5,444.3 1183.4,445.7 C1187.3,447.1 1195.8,446.5 1200.2,445.7 C1204.6,444.9 1206.7,439.5 1210.0,440.6 C1213.3,441.7 1215.7,448.7 1220.2,452.4 C1224.7,456.1 1232.0,462.9 1237.1,462.6 C1242.2,462.3 1246.1,453.5 1250.6,450.7 C1255.1,447.9 1259.6,449.1 1264.1,445.7 C1268.6,442.3 1272.5,435.3 1277.6,430.5 C1282.7,425.7 1290.0,422.1 1294.5,417.0 C1299.0,411.9 1301.2,408.4 1304.6,400.0 C1308.0,391.6 1310.8,377.2 1314.7,366.6 C1318.6,356.0 1324.2,347.4 1328.2,336.2 C1332.2,324.9 1335.0,311.5 1338.4,299.1 C1341.8,286.7 1345.1,272.7 1348.5,262.0 C1351.9,251.3 1355.2,243.7 1358.6,235.0 C1362.0,226.3 1364.8,215.3 1368.7,209.7 C1372.6,204.1 1377.7,205.7 1382.2,201.2 C1386.7,196.7 1391.2,187.1 1395.7,182.7 C1400.2,178.3 1405.2,174.9 1409.2,174.9 C1413.2,174.9 1415.5,176.6 1419.4,182.7 C1423.4,188.8 1429.0,201.0 1432.9,211.4 C1436.8,221.8 1439.1,230.5 1443.0,245.1 C1446.9,259.7 1450.3,280.5 1456.5,299.1 C1462.7,317.7 1472.8,343.0 1480.1,356.5 C1487.3,370.0 1495.4,372.9 1500.0,380.1 C1504.6,387.4 1504.6,394.4 1507.5,400.0 C1510.4,405.6 1514.2,408.5 1517.6,413.6 C1521.0,418.7 1523.8,424.0 1527.7,430.5 C1531.6,437.0 1536.7,448.2 1541.2,452.4 C1545.7,456.6 1550.8,455.8 1554.7,455.8 C1558.7,455.8 1561.5,451.3 1564.9,452.4 C1568.3,453.5 1570.5,459.8 1575.0,462.6 C1579.5,465.4 1588.0,468.5 1591.9,469.3 C1595.8,470.1 1594.7,470.4 1598.6,467.6 C1602.5,464.8 1609.9,456.0 1615.5,452.4 C1621.1,448.8 1627.3,446.8 1632.4,445.7 C1637.5,444.6 1641.4,448.2 1645.9,445.7 C1650.4,443.2 1655.5,435.3 1659.4,430.5 C1663.3,425.7 1665.6,422.1 1669.5,417.0 C1673.4,411.9 1678.5,410.8 1683.0,400.1 C1687.5,389.5 1692.0,364.9 1696.5,353.1 C1701.0,341.3 1707.8,333.4 1710.0,329.5" stroke="#5a5a5a" stroke-width="2.1" fill="none" stroke-linejoin="round"/>
<path d="M836.0,449.1 C839.4,449.9 848.3,451.9 856.2,454.1 C864.1,456.4 877.6,463.2 883.2,462.6 C888.8,462.0 886.6,453.8 890.0,450.7 C893.4,447.6 898.5,445.4 903.5,444.0 C908.5,442.6 916.1,444.3 920.0,442.3 C923.9,440.3 923.5,435.3 926.9,432.2 C930.3,429.1 934.8,427.9 940.4,423.7 C946.0,419.5 957.2,409.7 960.6,406.9" stroke="#2aa9a2" stroke-width="2" fill="none" stroke-linejoin="round"/><path d="M1176.6,437.2 C1177.7,438.6 1179.5,444.3 1183.4,445.7 C1187.3,447.1 1195.8,446.5 1200.2,445.7 C1204.6,444.9 1206.7,439.5 1210.0,440.6 C1213.3,441.7 1215.7,448.7 1220.2,452.4 C1224.7,456.1 1232.0,462.9 1237.1,462.6 C1242.2,462.3 1246.1,453.5 1250.6,450.7 C1255.1,447.9 1259.6,449.1 1264.1,445.7 C1268.6,442.3 1272.5,435.3 1277.6,430.5 C1282.7,425.7 1291.7,419.2 1294.5,417.0" stroke="#2aa9a2" stroke-width="2" fill="none" stroke-linejoin="round"/><path d="M1541.2,452.4 C1543.5,453.0 1550.8,455.8 1554.7,455.8 C1558.7,455.8 1561.5,451.3 1564.9,452.4 C1568.3,453.5 1570.5,459.8 1575.0,462.6 C1579.5,465.4 1588.0,468.5 1591.9,469.3 C1595.8,470.1 1594.7,470.4 1598.6,467.6 C1602.5,464.8 1609.9,456.0 1615.5,452.4 C1621.1,448.8 1627.3,446.8 1632.4,445.7 C1637.5,444.6 1641.4,448.2 1645.9,445.7 C1650.4,443.2 1657.2,433.0 1659.4,430.5" stroke="#2aa9a2" stroke-width="2" fill="none" stroke-linejoin="round"/>
<path d="M768.5,531.7 C770.8,530.6 778.1,526.4 782.0,525.0 C785.9,523.6 789.3,526.7 792.1,523.3 C794.9,519.9 795.5,509.5 798.9,504.7 C802.3,499.9 808.5,500.8 812.4,494.6 C816.3,488.4 818.6,476.0 822.5,467.6 C826.4,459.2 831.5,450.2 836.0,444.0 C840.5,437.8 845.0,436.7 849.5,430.5 C854.0,424.3 858.5,413.6 863.0,406.9 C867.5,400.1 874.2,392.8 876.5,390.0" stroke="#ee4a3c" stroke-width="2.2" fill="none" stroke-linejoin="round"/><path d="M1090.6,514.9 C1091.1,517.1 1091.4,526.4 1093.9,528.4 C1096.4,530.4 1102.0,525.9 1105.7,526.7 C1109.4,527.5 1112.0,533.4 1115.9,533.4 C1119.9,533.4 1124.9,528.1 1129.4,526.7 C1133.9,525.3 1139.0,529.8 1142.9,525.0 C1146.8,520.2 1149.6,505.3 1153.0,498.0 C1156.4,490.7 1159.7,488.4 1163.1,481.1 C1166.5,473.8 1170.4,459.4 1173.2,454.1 C1176.0,448.8 1177.2,450.2 1180.0,449.1 C1182.8,448.0 1186.2,448.0 1190.1,447.4 C1194.0,446.8 1200.3,450.8 1203.6,445.7 C1206.9,440.6 1208.3,422.9 1210.0,417.0 C1211.7,411.1 1209.5,414.7 1213.5,410.2 C1217.5,405.7 1228.6,395.9 1233.7,390.0 C1238.8,384.1 1242.2,377.5 1243.9,375.0" stroke="#ee4a3c" stroke-width="2.2" fill="none" stroke-linejoin="round"/><path d="M1453.1,528.4 C1455.9,526.7 1465.5,520.5 1470.0,518.2 C1474.5,516.0 1476.7,516.6 1480.1,514.9 C1483.5,513.2 1486.9,512.1 1490.2,508.1 C1493.5,504.2 1496.0,492.3 1500.0,491.2 C1504.0,490.1 1510.1,503.6 1514.2,501.4 C1518.3,499.1 1521.6,485.0 1524.4,477.7 C1527.2,470.4 1527.7,464.8 1531.1,457.5 C1534.5,450.2 1539.5,441.2 1544.6,433.9 C1549.7,426.6 1557.6,419.2 1561.5,413.6 C1565.4,408.0 1564.8,407.3 1568.2,400.0 C1571.6,392.7 1577.2,375.0 1581.7,370.0 C1586.2,365.0 1590.7,367.2 1595.2,370.0 C1599.7,372.8 1604.2,386.9 1608.7,386.9 C1613.2,386.9 1618.9,374.5 1622.3,370.0 C1625.7,365.5 1627.9,361.6 1629.0,359.9" stroke="#ee4a3c" stroke-width="2.2" fill="none" stroke-linejoin="round"/>
<path d="M48.7,465.4 C50.6,463.3 56.4,458.4 59.9,453.0 C63.4,447.6 66.9,439.5 69.8,433.3 C72.7,427.1 74.7,420.1 77.2,416.0 C79.7,411.9 82.1,410.6 84.6,408.5 C87.1,406.4 89.1,406.5 92.0,403.6 C94.9,400.7 98.6,395.3 101.9,391.2 C105.2,387.1 108.5,382.1 111.8,378.8 C115.1,375.5 118.0,375.7 121.7,371.4 C125.4,367.1 130.4,354.7 134.1,352.8 C137.8,350.9 141.1,358.8 144.0,360.2 C146.9,361.6 148.1,364.6 151.4,361.5 C154.7,358.4 160.1,345.4 163.8,341.7 C167.5,338.0 170.0,342.9 173.7,339.2 C177.4,335.5 182.8,323.7 186.1,319.4 C189.4,315.1 191.0,314.8 193.5,313.2 C196.0,311.6 197.2,313.8 200.9,309.5 C204.6,305.2 212.1,290.5 215.8,287.2 C219.5,283.9 220.3,289.1 223.2,289.7 C226.1,290.3 229.5,290.1 233.1,290.9 C236.7,291.7 241.8,294.4 245.0,294.7 C248.2,294.9 249.7,288.8 252.6,292.4 C255.5,295.9 258.8,308.1 262.7,316.0 C266.6,323.9 271.7,325.6 276.2,339.6 C280.7,353.6 285.2,385.4 289.7,400.0 C294.2,414.6 299.8,417.1 303.2,427.1 C306.6,437.1 307.3,450.9 310.0,460.0 C312.7,469.1 316.5,474.9 319.4,481.6 C322.3,488.4 324.8,495.1 327.5,500.5 C330.2,505.9 332.7,510.3 335.6,514.0 C338.5,517.7 341.5,521.4 345.1,522.8 C348.7,524.1 353.8,521.5 357.2,522.1 C360.6,522.7 362.4,525.5 365.3,526.2 C368.2,526.9 371.7,527.3 374.8,526.2 C377.9,525.1 381.1,520.8 384.2,519.4 C387.3,518.0 391.1,520.5 393.7,518.0 C396.3,515.5 396.6,507.9 400.0,504.6 C403.4,501.3 409.8,501.9 414.4,498.0 C419.0,494.1 423.4,485.9 427.9,481.1 C432.4,476.3 438.0,471.0 441.4,469.3 C444.8,467.6 444.7,473.5 448.1,471.0 C451.5,468.5 457.1,459.2 461.6,454.1 C466.1,449.0 471.7,446.8 475.1,440.6 C478.5,434.4 479.6,423.8 481.9,417.0 C484.1,410.2 484.7,405.6 488.6,400.0 C492.5,394.4 500.4,387.4 505.5,383.5 C510.6,379.6 514.5,379.5 519.0,376.7 C523.5,373.9 527.4,370.5 532.5,366.6 C537.6,362.7 544.9,355.6 549.4,353.1 C553.9,350.6 556.1,353.8 559.5,351.4 C562.9,349.0 565.6,343.2 570.0,339.0 C574.4,334.8 581.5,332.7 585.7,326.4 C589.9,320.1 590.5,308.0 595.2,301.2 C599.9,294.4 608.3,290.1 614.1,285.4 C619.9,280.7 625.1,273.9 629.8,272.8 C634.5,271.8 638.2,276.5 642.4,279.1 C646.6,281.7 651.3,284.4 655.0,288.6 C658.7,292.8 661.4,294.9 664.5,304.3 C667.6,313.8 670.8,332.2 673.9,345.3 C677.0,358.4 679.2,369.0 683.4,383.1 C687.6,397.2 693.9,414.8 699.1,430.0 C704.3,445.2 709.7,460.8 714.5,474.4 C719.3,488.0 724.1,502.8 728.0,511.5 C731.9,520.2 733.6,524.2 738.1,526.7 C742.6,529.2 749.9,526.1 755.0,526.7 C760.1,527.3 764.0,533.8 768.5,530.1 C773.0,526.4 777.5,513.4 782.0,504.7 C786.5,496.0 791.0,484.4 795.5,477.7 C800.0,470.9 804.5,470.4 809.0,464.2 C813.5,458.0 819.1,447.9 822.5,440.6 C825.9,433.3 826.4,424.9 829.2,420.4 C832.0,415.9 835.5,415.3 839.4,413.6 C843.3,411.9 849.0,412.4 852.9,410.2 C856.8,407.9 859.1,404.0 863.0,400.1 C866.9,396.2 872.0,391.9 876.5,386.9 C881.0,381.9 886.1,371.7 890.0,370.0 C893.9,368.3 896.7,378.9 900.1,376.7 C903.5,374.4 906.6,362.1 910.2,356.5 C913.8,350.9 917.3,348.1 921.8,343.0 C926.2,337.9 931.6,334.0 937.0,326.1 C942.4,318.2 949.4,301.9 953.9,295.7 C958.4,289.5 960.6,292.6 964.0,289.0 C967.4,285.4 970.5,277.4 974.1,273.8 C977.8,270.2 982.5,266.2 985.9,267.1 C989.3,268.0 991.3,276.6 994.4,278.9 C997.5,281.1 1001.1,277.8 1004.5,280.6 C1007.9,283.4 1011.8,287.6 1014.6,295.7 C1017.4,303.8 1018.6,317.1 1021.4,329.5 C1024.2,341.9 1028.7,358.2 1031.5,370.0 C1034.3,381.8 1034.8,388.2 1038.2,400.0 C1041.6,411.8 1046.6,427.7 1051.7,440.6 C1056.8,453.6 1063.5,468.1 1068.6,477.7 C1073.7,487.3 1078.4,492.1 1082.1,498.0 C1085.8,503.9 1087.2,511.5 1090.6,513.2 C1094.0,514.9 1098.8,508.1 1102.4,508.1 C1106.1,508.1 1108.0,514.9 1112.5,513.2 C1117.0,511.5 1124.3,503.6 1129.4,498.0 C1134.5,492.4 1137.9,486.1 1142.9,479.4 C1148.0,472.6 1154.7,465.1 1159.7,457.5 C1164.8,449.9 1168.7,441.2 1173.2,433.9 C1177.7,426.6 1182.8,417.0 1186.7,413.6 C1190.7,410.2 1193.0,415.3 1196.9,413.6 C1200.8,411.9 1203.9,409.1 1210.0,403.5 C1216.1,397.9 1228.0,385.1 1233.7,380.1 C1239.4,375.1 1239.4,377.9 1243.9,373.4 C1248.4,368.9 1256.2,359.9 1260.7,353.1 C1265.2,346.4 1267.5,340.8 1270.9,332.9 C1274.3,325.0 1277.1,312.1 1281.0,305.9 C1284.9,299.7 1290.0,299.4 1294.5,295.7 C1299.0,292.0 1304.1,285.9 1308.0,283.9 C1311.9,281.9 1314.7,285.9 1318.1,283.9 C1321.5,281.9 1325.4,275.8 1328.2,272.1 C1331.0,268.5 1332.8,262.8 1335.0,262.0 C1337.2,261.2 1339.5,264.3 1341.7,267.1 C1344.0,269.9 1345.7,273.0 1348.5,278.9 C1351.3,284.8 1354.7,292.9 1358.6,302.5 C1362.5,312.1 1368.7,326.1 1372.1,336.2 C1375.5,346.3 1376.1,352.6 1378.9,363.2 C1381.7,373.8 1386.2,391.0 1389.0,400.0 C1391.8,409.0 1391.8,408.6 1395.7,417.0 C1399.6,425.4 1407.5,439.4 1412.6,450.7 C1417.7,461.9 1421.6,473.2 1426.1,484.5 C1430.6,495.8 1435.7,511.2 1439.6,518.2 C1443.5,525.2 1445.8,527.2 1449.7,526.7 C1453.6,526.2 1458.7,519.1 1463.2,514.9 C1467.7,510.7 1470.6,507.6 1476.7,501.4 C1482.8,495.2 1494.3,483.9 1500.0,477.7 C1505.7,471.5 1506.8,468.7 1510.9,464.2 C1515.0,459.7 1521.0,455.8 1524.4,450.7 C1527.8,445.6 1528.3,440.6 1531.1,433.9 C1533.9,427.1 1537.3,415.8 1541.2,410.2 C1545.1,404.6 1550.8,403.4 1554.7,400.1 C1558.7,396.8 1560.4,395.8 1564.9,390.2 C1569.4,384.6 1576.1,371.7 1581.7,366.6 C1587.3,361.6 1594.1,361.3 1598.6,359.9 C1603.1,358.5 1604.8,357.6 1608.7,358.2 C1612.7,358.8 1617.2,366.9 1622.3,363.2 C1627.4,359.5 1634.0,341.2 1639.1,336.2 C1644.1,331.1 1647.5,337.4 1652.6,332.9 C1657.7,328.4 1664.4,314.5 1669.5,309.2 C1674.6,303.9 1678.5,303.1 1683.0,300.8 C1687.5,298.6 1692.0,295.1 1696.5,295.7 C1701.0,296.3 1707.8,302.8 1710.0,304.2" stroke="#4b3ddf" stroke-width="2.3" fill="none" stroke-linejoin="round"/>
<rect x="48" y="478.5" width="1663" height="2" fill="#f0c4f6"/>
<rect x="48" y="480" width="1663" height="3.6" fill="#b95ad9"/>

<text x="72" y="695.0" class="yl" textLength="20" lengthAdjust="spacingAndGlyphs">10</text>
<text x="72" y="571.0" class="yl" textLength="20" lengthAdjust="spacingAndGlyphs">20</text>
<text x="72" y="447.0" class="yl" textLength="20" lengthAdjust="spacingAndGlyphs">30</text>
<text x="72" y="323.0" class="yl" textLength="20" lengthAdjust="spacingAndGlyphs">40</text>
<text x="72" y="199.0" class="yl" textLength="20" lengthAdjust="spacingAndGlyphs">50</text>
<text x="72" y="75.0" class="yl" textLength="20" lengthAdjust="spacingAndGlyphs">60</text>

<path d="M178.5,485.7 L193.9,498.9 L187,498.9 L187,511.1 L169.9,511.1 L169.9,498.9 L163,498.9 Z" fill="#b56ce8" stroke="#2c3e50" stroke-width="1.1"/>
<path d="M646.9,539.3 L659.6,539.3 L659.6,531.6 L672.7,547.8 L659.6,564 L659.6,556.3 L646.9,556.3 Z" fill="#a6ecf0" stroke="#2b5b66" stroke-width="1.1"/>

<text x="61" y="109.7" font-size="30" font-weight="bold" fill="#1c1c1c" textLength="371.5" lengthAdjust="spacingAndGlyphs" >Mod #1 – Butterfly Valve</text>
<text x="88.6" y="539" font-size="21" font-weight="bold" fill="#1c1c1c" textLength="175" lengthAdjust="spacingAndGlyphs" >Density Setpoint</text>
<text x="433" y="553.2" font-size="21" font-weight="bold" fill="#1c1c1c" textLength="203" lengthAdjust="spacingAndGlyphs" >Feed Pump Density</text>
</g>
<rect x="24" y="753" width="1709" height="3" fill="#dfe6ec"/>
<rect x="26" y="755" width="1705" height="27" fill="#d9d9d9"/>
<rect x="26" y="785.5" width="1705" height="25.5" fill="#f0f0f0"/>
<rect x="26" y="812.5" width="1705" height="28.0" fill="#f0f0f0"/>
<rect x="26" y="841.5" width="1705" height="27.5" fill="#f0f0f0"/>
<rect x="538" y="755" width="1.6" height="114" fill="#fafafa"/>
<rect x="944.5" y="755" width="1.6" height="114" fill="#fafafa"/>
<rect x="1220" y="755" width="1.6" height="114" fill="#fafafa"/>
<rect x="1408" y="755" width="1.6" height="114" fill="#fafafa"/>
<rect x="26" y="781.5" width="1705" height="4" fill="#a3a3a3"/>
<rect x="27" y="812.5" width="79" height="28" fill="#a9f2f2"/>
<rect x="27" y="841.5" width="79" height="27.5" fill="#b56ae9"/>
<text x="51.5" y="729" font-size="22" font-weight="normal" fill="#1a1a1a" textLength="175" lengthAdjust="spacingAndGlyphs" >12/12/2023 17:10</text>
<text x="1532" y="725.9" font-size="22" font-weight="normal" fill="#1a1a1a" textLength="175" lengthAdjust="spacingAndGlyphs" >12/12/2023 19:10</text>
<text x="172" y="778" font-size="21" font-weight="bold" fill="#1c1c1c" textLength="222" lengthAdjust="spacingAndGlyphs" >Parameter Reference</text>
<text x="687.5" y="777.7" font-size="21" font-weight="bold" fill="#1c1c1c" textLength="112" lengthAdjust="spacingAndGlyphs" >Descriptor</text>
<text x="1052.5" y="778" font-size="21" font-weight="bold" fill="#1c1c1c" textLength="60" lengthAdjust="spacingAndGlyphs" >Value</text>
<text x="1291.5" y="778" font-size="21" font-weight="bold" fill="#1c1c1c" textLength="45" lengthAdjust="spacingAndGlyphs" >Unit</text>
<text x="1553" y="778" font-size="21" font-weight="bold" fill="#1c1c1c" textLength="35" lengthAdjust="spacingAndGlyphs" >Tag</text>
<text x="26" y="806.1" font-size="20.5" font-weight="normal" fill="#1c1c1c" textLength="233" lengthAdjust="spacingAndGlyphs" >Mod #1 Cyclone Trends</text>
<text x="106.5" y="834.7" font-size="20.5" font-weight="normal" fill="#1c1c1c" textLength="255" lengthAdjust="spacingAndGlyphs" >DENST1010A/AI1/OUT.CV</text>
<text x="106.5" y="863.3" font-size="20.5" font-weight="normal" fill="#1c1c1c" textLength="299" lengthAdjust="spacingAndGlyphs" >SPDENST1010A/PID1/OUT.CV</text>
<text x="539.5" y="834.7" font-size="20.5" font-weight="normal" fill="#1c1c1c" textLength="262" lengthAdjust="spacingAndGlyphs" >Train 1 Feed Pump Density</text>
<text x="539.5" y="863.5" font-size="20.5" font-weight="normal" fill="#1c1c1c" textLength="298.5" lengthAdjust="spacingAndGlyphs" >Train 1 Sump Density Setpoint</text>
<text x="945.5" y="834.7" font-size="20.5" font-weight="normal" fill="#1c1c1c" textLength="106" lengthAdjust="spacingAndGlyphs" >20.638125</text>
<text x="945.5" y="863.5" font-size="20.5" font-weight="normal" fill="#1c1c1c" textLength="24" lengthAdjust="spacingAndGlyphs" >27</text>
<text x="1220" y="834.7" font-size="20.5" font-weight="normal" fill="#1c1c1c" textLength="62" lengthAdjust="spacingAndGlyphs" >kg/m³</text>
<text x="1220" y="863.5" font-size="20.5" font-weight="normal" fill="#1c1c1c" textLength="62" lengthAdjust="spacingAndGlyphs" >kg/m³</text>
<text x="1407.5" y="834.7" font-size="20.5" font-weight="normal" fill="#1c1c1c" textLength="133.5" lengthAdjust="spacingAndGlyphs" >DENST1010A</text>
<text x="1407.5" y="863.5" font-size="20.5" font-weight="normal" fill="#1c1c1c" textLength="159" lengthAdjust="spacingAndGlyphs" >SPDENST1010A</text>
<g id="toolbar">
<!-- separators -->
<g>
<rect x="201" y="15" width="2" height="34" fill="#6e6a64"/><rect x="203.5" y="15" width="2" height="34" fill="#f4f2ee"/>
<rect x="331" y="20" width="1.6" height="23" fill="#8a867f"/><rect x="333" y="20" width="1.5" height="23" fill="#fbfaf8"/>
<rect x="419.5" y="20" width="1.6" height="23" fill="#8a867f"/><rect x="421.5" y="20" width="1.5" height="23" fill="#fbfaf8"/>
<rect x="548.8" y="15" width="2" height="34" fill="#6e6a64"/><rect x="551.2" y="15" width="2" height="34" fill="#f4f2ee"/>
<rect x="793" y="20" width="1.6" height="23" fill="#8a867f"/><rect x="795" y="20" width="1.5" height="23" fill="#fbfaf8"/>
<rect x="917" y="20" width="1.6" height="23" fill="#8a867f"/><rect x="919" y="20" width="1.5" height="23" fill="#fbfaf8"/>
<rect x="1005" y="20" width="1.6" height="23" fill="#8a867f"/><rect x="1007" y="20" width="1.5" height="23" fill="#fbfaf8"/>
<rect x="1197.3" y="20" width="1.6" height="23" fill="#8a867f"/><rect x="1199.3" y="20" width="1.5" height="23" fill="#fbfaf8"/>
<rect x="1252.3" y="15" width="2" height="34" fill="#6e6a64"/><rect x="1254.6" y="15" width="1.8" height="34" fill="#f4f2ee"/>
<rect x="1263" y="15" width="2" height="34" fill="#6e6a64"/><rect x="1265.3" y="15" width="1.8" height="34" fill="#f4f2ee"/>
<rect x="1355.4" y="20" width="1.6" height="23" fill="#8a867f"/><rect x="1357.4" y="20" width="1.5" height="23" fill="#fbfaf8"/>
<rect x="1486.3" y="15" width="2" height="34" fill="#6e6a64"/><rect x="1488.6" y="15" width="1.8" height="34" fill="#f4f2ee"/>
<rect x="1582" y="20" width="1.6" height="23" fill="#8a867f"/><rect x="1584" y="20" width="1.5" height="23" fill="#fbfaf8"/>
<rect x="1717.3" y="15" width="2" height="34" fill="#6e6a64"/><rect x="1719.6" y="15" width="1.8" height="34" fill="#f4f2ee"/>
</g>
<defs>
<linearGradient id="endg" x1="0" x2="1" y1="0" y2="0"><stop offset="0" stop-color="#d4d0c8"/><stop offset="0.6" stop-color="#9a968f"/><stop offset="1" stop-color="#5e5a55"/></linearGradient>
<linearGradient id="foldg" x1="0" x2="0" y1="0" y2="1"><stop offset="0" stop-color="#f2d040"/><stop offset="1" stop-color="#d9a200"/></linearGradient>
</defs>
<rect x="1721.5" y="15" width="9.5" height="34" fill="url(#endg)"/>
<!-- new doc -->
<path d="M47.5,22.5 H57.5 L64,29 V39.5 H47.5 Z" fill="#dfe5f5" stroke="#98a6c6" stroke-width="1"/>
<path d="M57.5,22.5 V29 H64" fill="#c5d0ea" stroke="#98a6c6" stroke-width="0.8"/>
<!-- open folder -->
<path d="M82.5,26 H88 L89.5,28 H99.5 V38 H82.5 Z" fill="#f5f0b0" stroke="#c9c27a" stroke-width="0.6"/>
<path d="M83,40.5 L87.5,32.5 H104 L100,40.5 Z" fill="url(#foldg)" stroke="#c08a00" stroke-width="0.6"/>
<path d="M94,25 Q99,19.5 104.5,24" fill="none" stroke="#7a7a7a" stroke-width="1.2"/>
<path d="M103,22 L107,26 L102.5,26.5 Z" fill="#6a6a6a"/>
<!-- save -->
<rect x="121.5" y="22" width="23.5" height="19.5" fill="#e6e3dc"/>
<rect x="122.2" y="22.7" width="22" height="18" fill="#808080"/>
<circle cx="137.7" cy="37.8" r="1.8" fill="#fff"/>
<!-- printer -->
<path d="M162.5,27 L166.5,22.5 H183.5 L181,27 Z" fill="#eef2f6" stroke="#6f8592" stroke-width="0.8"/>
<path d="M158.5,30 Q158.5,26.5 162,26.5 H183 Q185.5,26.5 185.5,30 V38.5 Q185.5,41.5 182,41.5 H162 Q158.5,41.5 158.5,38.5 Z" fill="#1c6a8c"/>
<rect x="161" y="31" width="22" height="4.5" fill="#b9dcea"/>
<circle cx="163.5" cy="33.2" r="1" fill="#2fd23a"/><circle cx="166.5" cy="33.2" r="1" fill="#e8303a"/>
<rect x="182" y="29" width="2.2" height="9" fill="#d9eef6"/>
<!-- sort icons -->
<g font-family="Liberation Sans" font-weight="bold" font-size="11" fill="#7a7a7a">
<g fill="#ffffff" transform="translate(0.9,0.9)">
<text x="220.8" y="29.4" textLength="11" lengthAdjust="spacingAndGlyphs">A</text><text x="220.8" y="40.6" textLength="11" lengthAdjust="spacingAndGlyphs">Z</text>
<text x="258" y="29.4" textLength="11" lengthAdjust="spacingAndGlyphs">Z</text><text x="258" y="40.6" textLength="11" lengthAdjust="spacingAndGlyphs">A</text>
<text x="295.4" y="29.4" textLength="11" lengthAdjust="spacingAndGlyphs">Z</text><text x="295.4" y="40.6" textLength="11" lengthAdjust="spacingAndGlyphs">A</text>
</g>
<text x="220.8" y="29.4" textLength="11" lengthAdjust="spacingAndGlyphs">A</text><text x="220.8" y="40.6" textLength="11" lengthAdjust="spacingAndGlyphs">Z</text>
<text x="258" y="29.4" textLength="11" lengthAdjust="spacingAndGlyphs">Z</text><text x="258" y="40.6" textLength="11" lengthAdjust="spacingAndGlyphs">A</text>
<text x="295.4" y="29.4" textLength="11" lengthAdjust="spacingAndGlyphs">Z</text><text x="295.4" y="40.6" textLength="11" lengthAdjust="spacingAndGlyphs">A</text>
</g>
<g fill="#ffffff" transform="translate(0.9,0.9)">
<rect x="239.2" y="21" width="1.8" height="15" /><path d="M236,34.5 H244 L240,40.8 Z"/>
<rect x="276.5" y="21" width="1.8" height="15" /><path d="M273.3,34.5 H281.3 L277.3,40.8 Z"/>
<rect x="313.6" y="24" width="1.8" height="12" /><path d="M310.5,34.5 H318.5 L314.5,40.8 Z"/><path d="M310.5,27.5 H318.5 L314.5,21.2 Z"/>
</g>
<g fill="#7a7a7a">
<rect x="239.2" y="21" width="1.8" height="15" /><path d="M236,34.5 H244 L240,40.8 Z"/>
<rect x="276.5" y="21" width="1.8" height="15" /><path d="M273.3,34.5 H281.3 L277.3,40.8 Z"/>
<rect x="313.6" y="24" width="1.8" height="12" /><path d="M310.5,34.5 H318.5 L314.5,40.8 Z"/><path d="M310.5,27.5 H318.5 L314.5,21.2 Z"/>
</g>
<!-- filter pencil -->
<path d="M344.5,22.5 H362.5 L355.5,29 V33 H351.5 V29 Z" fill="#3aa0a8" stroke="#152428" stroke-width="1.6" stroke-linejoin="round"/>
<path d="M368.5,27.5 L370.5,29.5 L361,40.5 L358.5,41 L359,38.5 Z" fill="#f0e020" stroke="#111" stroke-width="1"/>
<circle cx="349" cy="40.6" r="0.7" fill="#333"/><circle cx="351.5" cy="40.6" r="0.7" fill="#333"/><circle cx="354" cy="40.6" r="0.7" fill="#333"/>
<!-- filter crossed -->
<path d="M382,22.5 H398.5 L392,29 V33 H388.5 V29 Z" fill="#3aa0a8" stroke="#152428" stroke-width="1.6" stroke-linejoin="round"/>
<path d="M405,27.5 L407,29.5 L398,40 L395.5,40.5 L396,38 Z" fill="#f0e020" stroke="#111" stroke-width="1"/>
<ellipse cx="394.8" cy="31.3" rx="12.6" ry="9.8" fill="none" stroke="#ee2a2a" stroke-width="1.6"/>
<path d="M386,23.5 L403.5,39" stroke="#ee2a2a" stroke-width="1.6"/>
<!-- ! -->
<rect x="445.5" y="24" width="3.4" height="12" rx="1.5" fill="#8a8a8a"/><circle cx="447.2" cy="39" r="1.4" fill="#8a8a8a"/>
<!-- print list -->
<path d="M469.6,37 V23 H494" fill="none" stroke="#34e034" stroke-width="1.6"/>
<path d="M492,21.5 L495.8,23 L492,24.5 Z" fill="#34e034"/>
<path d="M476,26 H491.5 Q493,26 493,28 V36 H473 Z" fill="#fff" stroke="#111" stroke-width="1.3"/>
<rect x="477" y="27.5" width="12" height="1.6" fill="#5a5aff"/><rect x="477" y="30.5" width="12" height="1.6" fill="#3cc0c0"/><rect x="477" y="33.3" width="12" height="1.6" fill="#c01818"/>
<path d="M472.5,36.5 H493.5 Q496,36.5 496,38.8 Q496,41 493.5,41 H473.5 Q471,41 471,38.8 Q471,36.5 472.5,36.5 Z" fill="#fff" stroke="#111" stroke-width="1.3"/>
<rect x="485" y="38" width="4" height="1.6" fill="#34e034"/>
<!-- color list -->
<rect x="507.5" y="21.2" width="23.5" height="19.3" fill="#fff" stroke="#1a1a1a" stroke-width="1.5"/>
<rect x="508.3" y="22" width="5.3" height="4.3" fill="#1010f0"/><rect x="508.3" y="26.3" width="5.3" height="4.3" fill="#f5f010"/><rect x="508.3" y="30.6" width="5.3" height="4.3" fill="#f01010"/><rect x="508.3" y="34.9" width="5.3" height="4" fill="#1010f0"/><rect x="508.3" y="38.9" width="5.3" height="1" fill="#801060"/>
<rect x="515" y="23.5" width="14.5" height="2" fill="#707070"/><rect x="515" y="27.8" width="14.5" height="2" fill="#707070"/><rect x="515" y="32" width="14.5" height="2" fill="#707070"/><rect x="515" y="36.3" width="14.5" height="2" fill="#707070"/>
<!-- navigation -->
<g fill="none" stroke="#0c1c8c" stroke-width="2.6" stroke-linecap="square" stroke-linejoin="miter">
<path d="M579,23.5 L570.5,31.3 L579,39"/><path d="M589.5,23.5 L581,31.3 L589.5,39"/>
<path d="M622,23.5 L611.2,31.3 L622,39"/>
<path d="M689,23.5 L699.5,31.3 L689,39"/>
<path d="M720,23.5 L728.5,31.3 L720,39"/><path d="M729.5,23.5 L738,31.3 L729.5,39"/>
<path d="M759,23.5 L768.5,31.3 L759,39"/><path d="M774,23 V39.5"/>
<path d="M940,26.5 L933,31.3 L940,36"/><path d="M946.5,26.5 L953.5,31.3 L946.5,36"/>
<path d="M969.5,26.5 L976.5,31.3 L969.5,36"/><path d="M991,26.5 L984,31.3 L991,36"/>
</g>
<rect x="642.8" y="21.8" width="23.2" height="18.5" fill="none" stroke="#1e2aa0" stroke-width="1.5"/>
<path d="M654.4,22.5 V39.8" stroke="#111" stroke-width="1" stroke-dasharray="2,1.5"/>
<!-- chart icon 1 -->
<rect x="805" y="22" width="1.8" height="19.2" fill="#111"/>
<rect x="806.8" y="32" width="2.2" height="2.5" fill="#1515e0"/><rect x="806.8" y="34.5" width="2.2" height="2.3" fill="#f5e010"/><rect x="806.8" y="36.8" width="2.2" height="2.3" fill="#e01010"/><rect x="806.8" y="39.1" width="2.2" height="2" fill="#10a010"/>
<path d="M809,41 V32.5 H830.5 V41" fill="#e0e0e0" stroke="#111" stroke-width="1"/>
<rect x="813" y="34" width="3.5" height="6.5" fill="#8a8a8a"/><rect x="818.5" y="34" width="3.5" height="6.5" fill="#8a8a8a"/><rect x="824" y="34" width="3.5" height="6.5" fill="#8a8a8a"/>
<path d="M807,28 Q812,20 817,21.5 Q822,23 830.5,31" fill="none" stroke="#f02020" stroke-width="1.1"/>
<path d="M807,31 Q812,25 818,27 Q824,29 830,24" fill="none" stroke="#f0e020" stroke-width="1.6"/>
<path d="M808,30.5 Q814,27 820,26 Q825,24 830,21.5" fill="none" stroke="#3030f0" stroke-width="1"/>
<!-- plus wave -->
<path d="M849.5,22 V34 M843,28 H856" stroke="#1818e8" stroke-width="2.8"/>
<path d="M842,40.8 Q848,37 855,36 Q862,34 868,24" fill="none" stroke="#3838f0" stroke-width="1.1"/>
<!-- chart icon 2 -->
<path d="M880.5,21.5 V41 H906" fill="none" stroke="#111" stroke-width="1.5"/>
<path d="M879,24.5 h1.5 M879,28.5 h1.5 M879,32.5 h1.5 M879,36.5 h1.5" stroke="#111" stroke-width="1"/>
<path d="M882,40 Q888,34 893,28 Q898,22 905,20.5" fill="none" stroke="#a8a8a8" stroke-width="1"/>
<path d="M882,40 Q889,35 894,29 Q899,24 905,22" fill="none" stroke="#f0e020" stroke-width="2.2"/>
<path d="M883,40 Q890,36 895,31 Q900,26 905,24.5" fill="none" stroke="#f03020" stroke-width="1.3"/>
<path d="M883,40.5 Q891,38 896,33 Q901,28 906,26.5" fill="none" stroke="#3030e8" stroke-width="1.1"/>
<!-- combo -->
<rect x="1013.7" y="18" width="174" height="28.8" fill="#5a5a5a"/>
<rect x="1015.5" y="19.6" width="171" height="26.4" fill="#ffffff"/>
<rect x="1162.6" y="20.2" width="24" height="25.3" fill="#d4d0c8"/>
<path d="M1162.6,45.5 H1186.6 V20.2" fill="none" stroke="#6c6862" stroke-width="1.2"/>
<path d="M1162.8,45 V20.4 H1186" fill="none" stroke="#f8f6f2" stroke-width="1"/>
<path d="M1168.9,31.2 H1180.9 L1174.9,37 Z" fill="#111"/>
<rect x="1187.8" y="18" width="4" height="29" fill="#f6f4f0"/>
<text x="1042" y="40.9" font-family="Liberation Sans" font-weight="bold" font-size="22" fill="#0a0a0a" textLength="93" lengthAdjust="spacingAndGlyphs">00:25:36</text>
<!-- camera -->
<path d="M1212,23 L1214,26 M1218,21 V24.5 M1224,23 L1222,26 M1211,27.5 h2 M1223.5,27.5 h2" stroke="#f5f020" stroke-width="1.4"/>
<circle cx="1218" cy="25.5" r="2.2" fill="#f5f020"/>
<rect x="1210.8" y="25.8" width="23" height="15" fill="#f0eee8" stroke="#1c2aa0" stroke-width="1.8"/>
<rect x="1226" y="28" width="5" height="2.8" fill="#1c2aa0"/>
<ellipse cx="1219" cy="34" rx="6.5" ry="4.2" fill="#d8d8ee" stroke="#1c2aa0" stroke-width="1.5"/>
<ellipse cx="1219" cy="34" rx="3" ry="2" fill="#111"/>
<!-- wave compress / expand -->
<path d="M1281,34 Q1284,28 1286.5,31.5 Q1289,35 1292,32.5 Q1296,31 1300,33 H1305.5" fill="none" stroke="#1c1cf0" stroke-width="1.8"/>
<path d="M1294.5,21 V28 M1291.5,25.5 L1294.5,28.5 L1297.5,25.5 M1294.5,41 V36 M1291.5,38.5 L1294.5,35.5 L1297.5,38.5" fill="none" stroke="#111" stroke-width="1.6"/>
<path d="M1319,32 Q1322,28 1324.5,30.5 Q1327,34 1331,32 Q1336,30 1338,24 L1343,36" fill="none" stroke="#1c1cf0" stroke-width="1.8"/>
<path d="M1330.5,28.5 V22 M1327.5,24.5 L1330.5,21.5 L1333.5,24.5 M1330.5,35 V41 M1327.5,38.5 L1330.5,41.5 L1333.5,38.5" fill="none" stroke="#111" stroke-width="1.6"/>
<!-- monitors -->
<rect x="1369.5" y="21.5" width="24" height="12.5" rx="2" fill="#f4f2ee" stroke="#111" stroke-width="1.8"/>
<path d="M1371,28 L1374,24.5 L1376.5,28.5 L1379,27 H1383 L1385,28.5 H1392" fill="none" stroke="#1c1cf0" stroke-width="1.4"/>
<path d="M1373,38 H1392" stroke="#222" stroke-width="1.8"/><path d="M1371,38 L1375,35.5 V40.5 Z" fill="#111"/>
<rect x="1406.8" y="21.5" width="24" height="12.5" rx="2" fill="#f4f2ee" stroke="#111" stroke-width="1.8"/>
<path d="M1408.3,28 L1411.3,24.5 L1413.8,28.5 L1416.3,27 H1420.3 L1422.3,28.5 H1429.3" fill="none" stroke="#1c1cf0" stroke-width="1.4"/>
<path d="M1408,38 H1427" stroke="#222" stroke-width="1.8"/><path d="M1429.5,38 L1425.5,35.5 V40.5 Z" fill="#111"/>
<rect x="1444.5" y="21.3" width="23.5" height="19.2" fill="#e8e6e0" stroke="#9c9a96" stroke-width="1.2"/>
<path d="M1446,35 L1449,30 L1451.5,34 L1454,33 Q1458,31 1462,33 H1467" fill="none" stroke="#9a9894" stroke-width="1.1"/>
<!-- bars -->
<defs><linearGradient id="barg" x1="0" x2="0" y1="0" y2="1"><stop offset="0" stop-color="#6e78c4"/><stop offset="0.45" stop-color="#c4cbee"/><stop offset="1" stop-color="#e4e8f8"/></linearGradient>
<linearGradient id="vbarg" x1="0" x2="1" y1="0" y2="0"><stop offset="0" stop-color="#c8cff0"/><stop offset="1" stop-color="#e8ecfa"/></linearGradient></defs>
<rect x="1507.5" y="23.8" width="20.5" height="6" fill="url(#barg)" stroke="#9aa2d8" stroke-width="0.8"/>
<rect x="1507.5" y="32" width="20.5" height="7.8" fill="url(#barg)" stroke="#9aa2d8" stroke-width="0.8"/>
<rect x="1546.3" y="23.8" width="9" height="16" fill="url(#vbarg)" stroke="#9aa2d8" stroke-width="0.8"/>
<rect x="1558.5" y="23.8" width="9" height="16" fill="url(#vbarg)" stroke="#9aa2d8" stroke-width="0.8"/>
<rect x="1546.3" y="23.8" width="9" height="2.2" fill="#7a84c8"/><rect x="1558.5" y="23.8" width="9" height="2.2" fill="#7a84c8"/>
<!-- book -->
<path d="M1597,30 L1607,22.5 L1621,32 L1611,41.5 Z" fill="#2a9ad8" stroke="#16608a" stroke-width="0.8"/>
<path d="M1598,31 L1610,40 L1611,42.5 L1597.5,32.5 Z" fill="#a8e0f0"/>
<path d="M1604.5,27 Q1608,24.5 1611,27 Q1613,30 1609.5,32 L1609,34.5" fill="none" stroke="#f0a020" stroke-width="2.2"/>
<!-- green box cd -->
<path d="M1638,26 L1645,22.5 L1651,24 V38 L1644,41.5 L1638,39 Z" fill="#20a050" stroke="#0c6030" stroke-width="0.8"/>
<path d="M1645,22.5 L1651,24 L1644,27.5 L1638,26 Z" fill="#40c070"/>
<ellipse cx="1653" cy="35" rx="7.5" ry="6" fill="#d8e8f6" stroke="#6ab0e0" stroke-width="1"/>
<path d="M1646,34.5 Q1648,29.5 1653,29.5 L1653,35 Z" fill="#f0a820"/>
<path d="M1653,35 L1659,33 Q1659,38 1655,40 Z" fill="#3a90e0"/>
<!-- pointer ? -->
<path d="M1678.5,24 L1689.5,33 L1685,33.5 L1688,40.5 L1685.5,41.5 L1683,35 L1679.5,38 Z" fill="#b6c4ee" stroke="#a0b0e0" stroke-width="0.6"/>
<text x="1688" y="37.2" font-family="Liberation Sans" font-weight="bold" font-size="19" fill="#2e2e2e" textLength="13" lengthAdjust="spacingAndGlyphs">?</text>
</g>

</svg>
</body></html>
